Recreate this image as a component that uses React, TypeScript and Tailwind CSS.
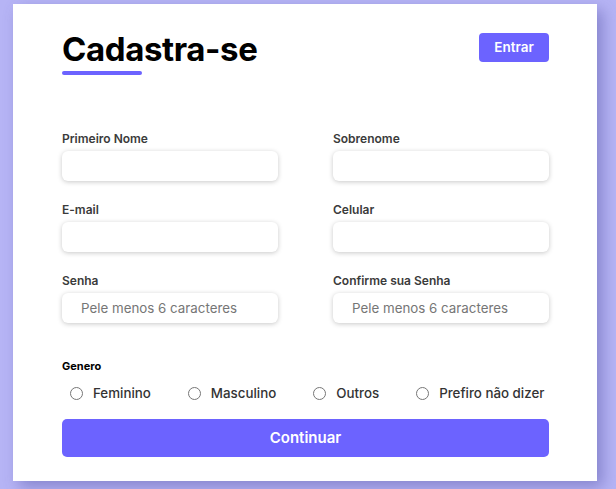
import React from 'react';

const font = { fontFamily: 'Inter, "Noto Sans", sans-serif' };

function Field({ label, placeholder }: { label: string; placeholder?: string }) {
  return (
    <div className="flex flex-col">
      <label className="text-[12px] leading-4 font-semibold text-[#3b3b3b] mb-[4px]">{label}</label>
      <input
        type="text"
        placeholder={placeholder}
        className="h-[30px] w-full rounded-[6px] bg-white px-[19px] text-[13.33px] text-[#333] placeholder:text-[#767676] outline-none shadow-[0_1px_5px_rgba(0,0,0,0.22)]"
      />
    </div>
  );
}

const genders = ['Feminino', 'Masculino', 'Outros', 'Prefiro não dizer'];

export default function App() {
  return (
    <div className="min-h-screen bg-[#b6b4f5] pl-[13px] pt-[4px]" style={font}>
      <div className="w-[584px] h-[477px] bg-white pl-[49px] pr-[48px] pt-[29px] shadow-[6px_6px_14px_rgba(80,78,160,0.45)]">
        {/* Header */}
        <div className="flex items-start justify-between">
          <div>
            <h1 className="text-[33px] leading-[30px] font-bold text-black tracking-[-0.4px] pt-[1px]">Cadastra-se</h1>
            <div className="mt-[7px] h-[4px] w-[80px] rounded-full bg-[#6c63ff]" />
          </div>
          <button className="h-[29px] w-[70px] rounded-[4px] bg-[#6c63ff] text-[13.5px] font-semibold text-white">
            Entrar
          </button>
        </div>

        {/* Fields */}
        <div className="mt-[56px] grid grid-cols-2 gap-x-[55px] gap-y-[21px]">
          <Field label="Primeiro Nome" />
          <Field label="Sobrenome" />
          <Field label="E-mail" />
          <Field label="Celular" />
          <Field label="Senha" placeholder="Pele menos 6 caracteres" />
          <Field label="Confirme sua Senha" placeholder="Pele menos 6 caracteres" />
        </div>

        {/* Genero */}
        <div className="mt-[36px]">
          <p className="text-[11px] leading-[14px] font-bold text-black">Genero</p>
          <div className="mt-[12px] flex items-center gap-[37px] pl-[8px]">
            {genders.map((g) => (
              <label key={g} className="flex items-center gap-[10px] whitespace-nowrap text-[13.33px] leading-4 font-medium text-[#333]">
                <input type="radio" name="genero" className="m-0 h-[13px] w-[13px]" />
                {g}
              </label>
            ))}
          </div>
        </div>

        <button className="mt-[18px] h-[38px] w-full rounded-[5px] bg-[#6c63ff] text-[15px] font-semibold text-white">
          Continuar
        </button>
      </div>
    </div>
  );
}
